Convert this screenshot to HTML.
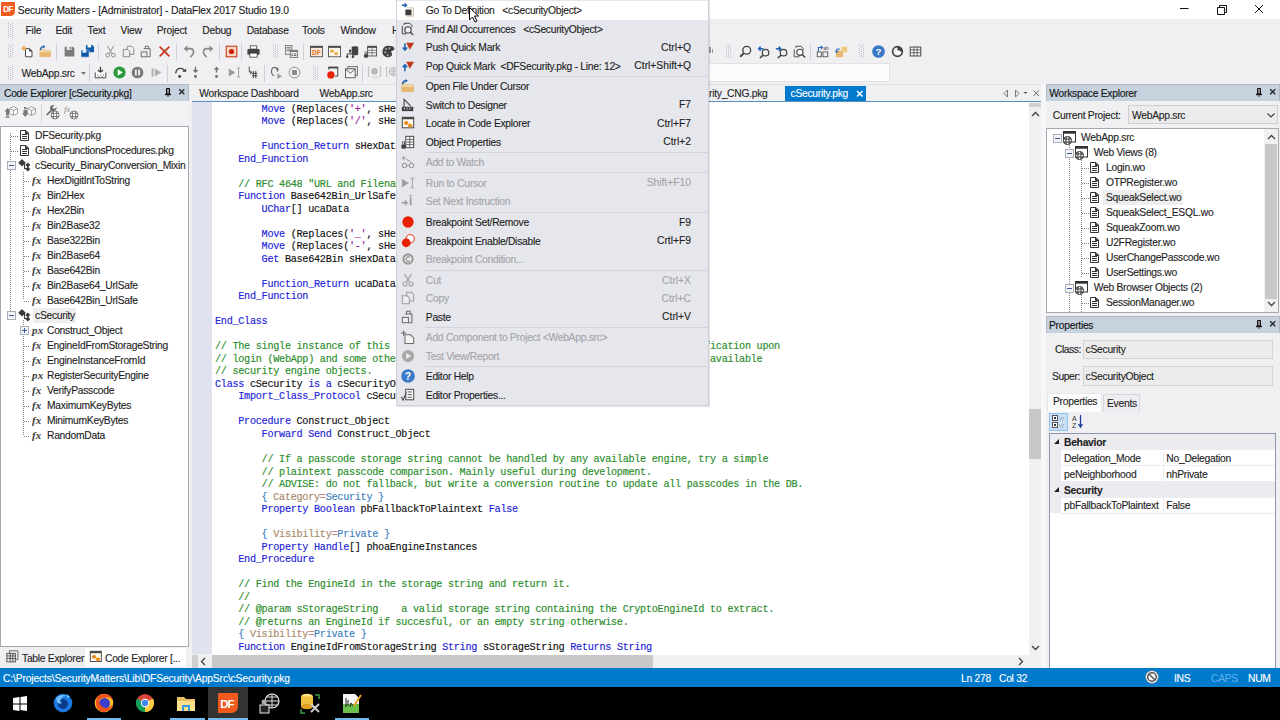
<!DOCTYPE html><html><head><meta charset="utf-8"><style>
*{margin:0;padding:0;box-sizing:border-box}
html,body{width:1280px;height:720px;overflow:hidden;background:#f0f0f2;font-family:"Liberation Sans",sans-serif;font-size:10.3px;color:#1e1e1e;position:relative}
.a{position:absolute}
.t{position:absolute;white-space:pre;line-height:14px;letter-spacing:-0.27px;-webkit-text-stroke:0.12px currentColor}
.code{position:absolute;font-family:"Liberation Mono",monospace;font-size:10.2px;letter-spacing:-0.29px;line-height:12.52px;white-space:pre;color:#111;-webkit-text-stroke:0.15px currentColor}
.k{color:#2323d8}
.c{color:#2a8c2a}
.m{color:#a88868}
.q{color:#c08888}
.b{color:#3c80c0}
.s{color:#a020a0}
svg{position:absolute;overflow:visible}
</style></head><body><div class="a" style="left:0px;top:0px;width:1280px;height:19px;background:#fff;"></div>
<svg style="left:1px;top:2px" width="14" height="14"><path d="M0 1Q0 0 1 0H14V9Q14 14 9 14H0Z" fill="#f05a1e"/><text x="2" y="10.3" font-size="8.3" font-family="Liberation Sans" font-weight="bold" fill="#fff" letter-spacing="-0.7">DF</text></svg>
<div class="t" style="left:17.8px;top:3.50px;font-size:10.3px;color:#1a1a1a;letter-spacing:-0.16px">Security Matters - [Administrator] - DataFlex 2017 Studio 19.0</div>
<svg style="left:1180px;top:4px" width="90" height="12"><path d="M0 4.5H8.5" stroke="#111" stroke-width="1"/><path d="M37.5 3.5H44.5V10.5H37.5Z M39.5 3.5V1.5H46.5V8.5H44.5" stroke="#111" fill="none" stroke-width="1"/><path d="M75 1L83 9M83 1L75 9" stroke="#111" stroke-width="1"/></svg>
<svg style="left:8px;top:23px" width="5" height="15"><g fill="#c0c0c8"><rect x="0" y="0" width="1" height="1"/><rect x="4" y="0" width="1" height="1"/><rect x="2" y="1" width="1" height="1"/><rect x="0" y="2" width="1" height="1"/><rect x="4" y="2" width="1" height="1"/><rect x="2" y="3" width="1" height="1"/><rect x="0" y="4" width="1" height="1"/><rect x="4" y="4" width="1" height="1"/><rect x="2" y="5" width="1" height="1"/><rect x="0" y="6" width="1" height="1"/><rect x="4" y="6" width="1" height="1"/><rect x="2" y="7" width="1" height="1"/><rect x="0" y="8" width="1" height="1"/><rect x="4" y="8" width="1" height="1"/><rect x="2" y="9" width="1" height="1"/><rect x="0" y="10" width="1" height="1"/><rect x="4" y="10" width="1" height="1"/><rect x="2" y="11" width="1" height="1"/><rect x="0" y="12" width="1" height="1"/><rect x="4" y="12" width="1" height="1"/><rect x="2" y="13" width="1" height="1"/><rect x="0" y="14" width="1" height="1"/><rect x="4" y="14" width="1" height="1"/></g></svg>
<div class="t" style="left:25.6px;top:23.50px;font-size:10.3px;">File</div>
<div class="t" style="left:55.5px;top:23.50px;font-size:10.3px;">Edit</div>
<div class="t" style="left:87.5px;top:23.50px;font-size:10.3px;">Text</div>
<div class="t" style="left:120.5px;top:23.50px;font-size:10.3px;">View</div>
<div class="t" style="left:156.7px;top:23.50px;font-size:10.3px;">Project</div>
<div class="t" style="left:202.3px;top:23.50px;font-size:10.3px;">Debug</div>
<div class="t" style="left:246.7px;top:23.50px;font-size:10.3px;">Database</div>
<div class="t" style="left:302px;top:23.50px;font-size:10.3px;">Tools</div>
<div class="t" style="left:340.6px;top:23.50px;font-size:10.3px;">Window</div>
<div class="t" style="left:392px;top:23.50px;font-size:10.3px;">Help</div>
<svg style="left:8px;top:44px" width="5" height="14"><g fill="#c0c0c8"><rect x="0" y="0" width="1" height="1"/><rect x="4" y="0" width="1" height="1"/><rect x="2" y="1" width="1" height="1"/><rect x="0" y="2" width="1" height="1"/><rect x="4" y="2" width="1" height="1"/><rect x="2" y="3" width="1" height="1"/><rect x="0" y="4" width="1" height="1"/><rect x="4" y="4" width="1" height="1"/><rect x="2" y="5" width="1" height="1"/><rect x="0" y="6" width="1" height="1"/><rect x="4" y="6" width="1" height="1"/><rect x="2" y="7" width="1" height="1"/><rect x="0" y="8" width="1" height="1"/><rect x="4" y="8" width="1" height="1"/><rect x="2" y="9" width="1" height="1"/><rect x="0" y="10" width="1" height="1"/><rect x="4" y="10" width="1" height="1"/><rect x="2" y="11" width="1" height="1"/><rect x="0" y="12" width="1" height="1"/><rect x="4" y="12" width="1" height="1"/><rect x="2" y="13" width="1" height="1"/></g></svg>
<svg style="left:21px;top:44.5px" width="13.0" height="13.0" viewBox="0 0 16 16"><path d="M5.5 4.5H10.5L13.5 7.5V14.5H5.5Z" fill="#fff" stroke="#424242" stroke-width="1.2"/><path d="M10 4L14 8H10Z" fill="#424242"/><path d="M3.5 1V7M0.5 4H6.5M1.4 1.9L5.6 6.1M5.6 1.9L1.4 6.1" stroke="#f0a030" stroke-width="1.1"/></svg>
<svg style="left:39px;top:44.5px" width="13.0" height="13.0" viewBox="0 0 16 16"><path d="M1 5H6L7 6.5H14V14.5H1Z" fill="#f0d8a8" stroke="#e0b878" stroke-width="0.8"/><path d="M1 9H15L14 14.5H1Z" fill="#e8b870"/><path d="M2 6Q2 2 6 2" stroke="#1e64b4" stroke-width="1.8" fill="none"/><path d="M5 0L8 2L5 4Z" fill="#1e64b4"/></svg>
<svg style="left:63px;top:44.5px" width="13.0" height="13.0" viewBox="0 0 16 16"><path d="M2 2H12L14 4V14H2Z" fill="#7a7a7a"/><rect x="4.5" y="2" width="6" height="4" fill="#eee"/><rect x="8" y="2.5" width="1.5" height="2.5" fill="#7a7a7a"/></svg>
<svg style="left:81px;top:44.5px" width="13.0" height="13.0" viewBox="0 0 16 16"><path d="M6 0H14L16 2V9H6Z" fill="#0f5aaa"/><rect x="8" y="0" width="4.5" height="3" fill="#fff"/><path d="M0 6H8L10 8V15H0Z" fill="#0f5aaa" stroke="#eeeef2" stroke-width="0.8"/><rect x="2" y="6.4" width="4.5" height="3" fill="#fff"/></svg>
<svg style="left:104px;top:44.5px" width="13.0" height="13.0" viewBox="0 0 16 16"><path d="M4 1L10 11M12 1L6 11" stroke="#8a8a8a" stroke-width="1.2" fill="none"/><circle cx="4.5" cy="12.5" r="2.3" stroke="#8a8a8a" stroke-width="1.2" fill="none"/><circle cx="11.5" cy="12.5" r="2.3" stroke="#8a8a8a" stroke-width="1.2" fill="none"/></svg>
<svg style="left:122px;top:44.5px" width="13.0" height="13.0" viewBox="0 0 16 16"><path d="M6.5 1.5H12L14.5 4V11.5H6.5Z" fill="none" stroke="#8a8a8a" stroke-width="1.2"/><path d="M1.5 5.5H7L9.5 8V14.5H1.5Z" fill="#eeeef2" stroke="#8a8a8a" stroke-width="1.2"/></svg>
<svg style="left:140px;top:44.5px" width="13.0" height="13.0" viewBox="0 0 16 16"><path d="M6.5 4.5V1.5H10.5V4.5M4.5 4.5H12.5V14.5H9" fill="none" stroke="#6d6d6d" stroke-width="1.2"/><rect x="1.5" y="8.5" width="7" height="6" fill="#eeeef2" stroke="#6d6d6d" stroke-width="1.2"/></svg>
<svg style="left:158px;top:44.5px" width="13.0" height="13.0" viewBox="0 0 16 16"><path d="M2 2L14 14M14 2L2 14" stroke="#c8341a" stroke-width="2"/></svg>
<svg style="left:183px;top:44.5px" width="13.0" height="13.0" viewBox="0 0 16 16"><path d="M4.5 4.5H8.5Q13 4.5 13 9Q13 12 9 15" stroke="#8a8a8a" stroke-width="2" fill="none"/><path d="M0.8 4.5L5.5 0.5V8.5Z" fill="#8a8a8a"/></svg>
<svg style="left:201px;top:44.5px" width="13.0" height="13.0" viewBox="0 0 16 16"><path d="M11.5 4.5H7.5Q3 4.5 3 9Q3 12 7 15" stroke="#8a8a8a" stroke-width="2" fill="none"/><path d="M15.2 4.5L10.5 0.5V8.5Z" fill="#8a8a8a"/></svg>
<svg style="left:225px;top:44.5px" width="13.0" height="13.0" viewBox="0 0 16 16"><rect x="1.5" y="1.5" width="13" height="13" fill="#f8d8c8" stroke="#c84020" stroke-width="1.4"/><circle cx="8" cy="8" r="3.2" fill="#d02000"/></svg>
<svg style="left:247px;top:44.5px" width="13.0" height="13.0" viewBox="0 0 16 16"><rect x="4" y="1" width="8" height="4" fill="#fff" stroke="#424242" stroke-width="1"/><rect x="0.5" y="5" width="15" height="7" rx="1" fill="#424242"/><rect x="3.5" y="10" width="9" height="5" fill="#fff" stroke="#424242" stroke-width="1"/></svg>
<svg style="left:285px;top:44.5px" width="13.0" height="13.0" viewBox="0 0 16 16"><rect x="0.5" y="0.5" width="8" height="11" fill="#e8e8e8" stroke="#6d6d6d"/><path d="M2 3H7M2 5H7M2 7H7" stroke="#6d6d6d"/><rect x="6.5" y="6.5" width="9" height="9" fill="#f4f4f4" stroke="#6d6d6d"/><rect x="6.5" y="6.5" width="9" height="2" fill="#6d6d6d"/><path d="M8 11H10M11 11H14M8 13H10M11 13H14" stroke="#424242"/></svg>
<svg style="left:310px;top:44.5px" width="13.0" height="13.0" viewBox="0 0 16 16"><rect x="0.5" y="1.5" width="15" height="13" fill="#fbe8d8" stroke="#424242"/><rect x="0.5" y="1.5" width="15" height="2" fill="#424242"/><text x="2.5" y="12.5" font-size="8" font-weight="bold" font-family="Liberation Sans" fill="#e07020">DF</text></svg>
<svg style="left:328px;top:44.5px" width="13.0" height="13.0" viewBox="0 0 16 16"><rect x="0.5" y="1.5" width="15" height="13" fill="#fcf4e4" stroke="#424242"/><rect x="0.5" y="1.5" width="15" height="2" fill="#424242"/><rect x="3" y="6" width="4" height="3" fill="#e8a030"/><rect x="8" y="9" width="4" height="3" fill="#e8a030"/></svg>
<svg style="left:346px;top:44.5px" width="13.0" height="13.0" viewBox="0 0 16 16"><ellipse cx="11" cy="3" rx="4" ry="1.6" fill="#424242"/><rect x="7" y="3" width="8" height="8" fill="#424242"/><ellipse cx="11" cy="11" rx="4" ry="1.6" fill="#424242"/><path d="M5 7V11M1.5 15V11H8.5V15" stroke="#424242" stroke-width="1.2" fill="none"/><circle cx="5" cy="7" r="1.5" fill="#424242"/><circle cx="1.5" cy="14.5" r="1.5" fill="#424242"/><circle cx="8.5" cy="14.5" r="1.5" fill="#424242"/></svg>
<svg style="left:364px;top:44.5px" width="13.0" height="13.0" viewBox="0 0 16 16"><rect x="4.5" y="1.5" width="11" height="12" fill="#f0f0f0" stroke="#424242"/><rect x="4.5" y="1.5" width="11" height="2" fill="#424242"/><path d="M5 6.5H15M5 9.5H15M10 4V13" stroke="#6d6d6d"/><path d="M1.5 8V12M3.5 8V12M0.5 12H4.5V15H0.5Z" stroke="#424242" fill="#424242"/></svg>
<svg style="left:382px;top:44.5px" width="13.0" height="13.0" viewBox="0 0 16 16"><path d="M8 1Q15 1 15.5 5Q15 7 12 7.5Q10.5 8 12 10Q13.5 12.5 10 14.5Q8 15.5 6 15Q0.5 14 0.5 8Q1 1 8 1Z" fill="#424242"/><circle cx="5" cy="5" r="1.2" fill="#aaa"/><circle cx="9" cy="4" r="1.2" fill="#aaa"/><circle cx="4" cy="9" r="1.2" fill="#aaa"/><circle cx="7" cy="12.5" r="1.2" fill="#aaa"/></svg>
<svg style="left:739px;top:44.5px" width="13.0" height="13.0" viewBox="0 0 16 16"><circle cx="9.5" cy="6.5" r="4.8" fill="none" stroke="#424242" stroke-width="1.7"/><path d="M6 10L1.5 14.5" stroke="#424242" stroke-width="2.4"/></svg>
<svg style="left:757px;top:44.5px" width="13.0" height="13.0" viewBox="0 0 16 16"><circle cx="10.5" cy="9.5" r="4" fill="none" stroke="#424242" stroke-width="1.5"/><path d="M7.5 12.5L3.5 16" stroke="#424242" stroke-width="2"/><path d="M8 4.5H2M4.5 2L2 4.5L4.5 7" stroke="#1e64b4" stroke-width="1.8" fill="none"/></svg>
<svg style="left:775px;top:44.5px" width="13.0" height="13.0" viewBox="0 0 16 16"><circle cx="10.5" cy="9.5" r="4" fill="none" stroke="#424242" stroke-width="1.5"/><path d="M7.5 12.5L3.5 16" stroke="#424242" stroke-width="2"/><path d="M1 4.5H7M4.5 2L7 4.5L4.5 7" stroke="#1e64b4" stroke-width="1.8" fill="none"/></svg>
<svg style="left:793px;top:44.5px" width="13.0" height="13.0" viewBox="0 0 16 16"><path d="M3.5 3.5V1.5H10L12.5 4V6M1.5 5.5V14.5H8" stroke="#424242" fill="none" stroke-width="1.1"/><circle cx="8.5" cy="9" r="3.8" fill="#fff" stroke="#424242" stroke-width="1.4"/><path d="M11 11.5L15 15.5" stroke="#424242" stroke-width="1.8"/></svg>
<svg style="left:816px;top:44.5px" width="13.0" height="13.0" viewBox="0 0 16 16"><rect x="1.5" y="8.5" width="5" height="6" fill="none" stroke="#424242"/><rect x="8.5" y="8.5" width="6" height="6" fill="none" stroke="#424242"/><path d="M3 8V3H8M6 1L8 3L6 5" stroke="#1e64b4" stroke-width="1.3" fill="none"/><text x="9" y="6" font-size="6" font-family="Liberation Sans" fill="#424242">ab</text></svg>
<svg style="left:835px;top:44.5px" width="13.0" height="13.0" viewBox="0 0 16 16"><rect x="1" y="7" width="9" height="8" fill="#e8b870"/><rect x="8" y="2" width="7" height="7" fill="#f0c880"/><path d="M6 5H2V9M0 7L2 9.5L4 7" stroke="#1e64b4" stroke-width="1.2" fill="none"/></svg>
<svg style="left:872px;top:44.5px" width="13.0" height="13.0" viewBox="0 0 16 16"><circle cx="8" cy="8" r="7.8" fill="#3a78c8"/><text x="8" y="12.6" text-anchor="middle" font-size="12" font-weight="bold" font-family="Liberation Sans" fill="#fff">?</text></svg>
<svg style="left:891px;top:44.5px" width="13.0" height="13.0" viewBox="0 0 16 16"><circle cx="8" cy="8" r="6" fill="none" stroke="#424242" stroke-width="2"/><path d="M8 8V2A6 6 0 0 1 14 8Z" fill="#424242"/><circle cx="9" cy="9" r="2.5" fill="#fff"/></svg>
<svg style="left:909px;top:44.5px" width="13.0" height="13.0" viewBox="0 0 16 16"><rect x="1.5" y="2.5" width="13" height="11" fill="#fff" stroke="#424242" stroke-width="1.2"/><path d="M1.5 6H14.5M1.5 9.5H14.5M6 2.5V13.5M10 2.5V13.5" stroke="#424242"/></svg>
<div class="a" style="left:56px;top:43px;width:1px;height:17px;background:#cfd0d8;"></div>
<div class="a" style="left:98px;top:43px;width:1px;height:17px;background:#cfd0d8;"></div>
<div class="a" style="left:176px;top:43px;width:1px;height:17px;background:#cfd0d8;"></div>
<div class="a" style="left:219px;top:43px;width:1px;height:17px;background:#cfd0d8;"></div>
<div class="a" style="left:241px;top:43px;width:1px;height:17px;background:#cfd0d8;"></div>
<div class="a" style="left:303px;top:43px;width:1px;height:17px;background:#cfd0d8;"></div>
<div class="a" style="left:810px;top:43px;width:1px;height:17px;background:#cfd0d8;"></div>
<svg style="left:273px;top:44px" width="5" height="14"><g fill="#c0c0c8"><rect x="0" y="0" width="1" height="1"/><rect x="4" y="0" width="1" height="1"/><rect x="2" y="1" width="1" height="1"/><rect x="0" y="2" width="1" height="1"/><rect x="4" y="2" width="1" height="1"/><rect x="2" y="3" width="1" height="1"/><rect x="0" y="4" width="1" height="1"/><rect x="4" y="4" width="1" height="1"/><rect x="2" y="5" width="1" height="1"/><rect x="0" y="6" width="1" height="1"/><rect x="4" y="6" width="1" height="1"/><rect x="2" y="7" width="1" height="1"/><rect x="0" y="8" width="1" height="1"/><rect x="4" y="8" width="1" height="1"/><rect x="2" y="9" width="1" height="1"/><rect x="0" y="10" width="1" height="1"/><rect x="4" y="10" width="1" height="1"/><rect x="2" y="11" width="1" height="1"/><rect x="0" y="12" width="1" height="1"/><rect x="4" y="12" width="1" height="1"/><rect x="2" y="13" width="1" height="1"/></g></svg>
<svg style="left:726px;top:44px" width="5" height="14"><g fill="#c0c0c8"><rect x="0" y="0" width="1" height="1"/><rect x="4" y="0" width="1" height="1"/><rect x="2" y="1" width="1" height="1"/><rect x="0" y="2" width="1" height="1"/><rect x="4" y="2" width="1" height="1"/><rect x="2" y="3" width="1" height="1"/><rect x="0" y="4" width="1" height="1"/><rect x="4" y="4" width="1" height="1"/><rect x="2" y="5" width="1" height="1"/><rect x="0" y="6" width="1" height="1"/><rect x="4" y="6" width="1" height="1"/><rect x="2" y="7" width="1" height="1"/><rect x="0" y="8" width="1" height="1"/><rect x="4" y="8" width="1" height="1"/><rect x="2" y="9" width="1" height="1"/><rect x="0" y="10" width="1" height="1"/><rect x="4" y="10" width="1" height="1"/><rect x="2" y="11" width="1" height="1"/><rect x="0" y="12" width="1" height="1"/><rect x="4" y="12" width="1" height="1"/><rect x="2" y="13" width="1" height="1"/></g></svg>
<svg style="left:859px;top:44px" width="5" height="14"><g fill="#c0c0c8"><rect x="0" y="0" width="1" height="1"/><rect x="4" y="0" width="1" height="1"/><rect x="2" y="1" width="1" height="1"/><rect x="0" y="2" width="1" height="1"/><rect x="4" y="2" width="1" height="1"/><rect x="2" y="3" width="1" height="1"/><rect x="0" y="4" width="1" height="1"/><rect x="4" y="4" width="1" height="1"/><rect x="2" y="5" width="1" height="1"/><rect x="0" y="6" width="1" height="1"/><rect x="4" y="6" width="1" height="1"/><rect x="2" y="7" width="1" height="1"/><rect x="0" y="8" width="1" height="1"/><rect x="4" y="8" width="1" height="1"/><rect x="2" y="9" width="1" height="1"/><rect x="0" y="10" width="1" height="1"/><rect x="4" y="10" width="1" height="1"/><rect x="2" y="11" width="1" height="1"/><rect x="0" y="12" width="1" height="1"/><rect x="4" y="12" width="1" height="1"/><rect x="2" y="13" width="1" height="1"/></g></svg>
<div class="a" style="left:709px;top:47px;width:1.5px;height:6px;background:#9a9a9a;"></div>
<div class="a" style="left:711.5px;top:49px;width:1.5px;height:4px;background:#9a9a9a;"></div>
<svg style="left:8px;top:66px" width="5" height="14"><g fill="#c0c0c8"><rect x="0" y="0" width="1" height="1"/><rect x="4" y="0" width="1" height="1"/><rect x="2" y="1" width="1" height="1"/><rect x="0" y="2" width="1" height="1"/><rect x="4" y="2" width="1" height="1"/><rect x="2" y="3" width="1" height="1"/><rect x="0" y="4" width="1" height="1"/><rect x="4" y="4" width="1" height="1"/><rect x="2" y="5" width="1" height="1"/><rect x="0" y="6" width="1" height="1"/><rect x="4" y="6" width="1" height="1"/><rect x="2" y="7" width="1" height="1"/><rect x="0" y="8" width="1" height="1"/><rect x="4" y="8" width="1" height="1"/><rect x="2" y="9" width="1" height="1"/><rect x="0" y="10" width="1" height="1"/><rect x="4" y="10" width="1" height="1"/><rect x="2" y="11" width="1" height="1"/><rect x="0" y="12" width="1" height="1"/><rect x="4" y="12" width="1" height="1"/><rect x="2" y="13" width="1" height="1"/></g></svg>
<div class="t" style="left:21.5px;top:67.20px;font-size:10.3px;">WebApp.src</div>
<svg style="left:81px;top:72px" width="5" height="3"><path d="M0 0H5L2.5 3Z" fill="#777"/></svg>
<div class="a" style="left:89px;top:65px;width:1px;height:17px;background:#cfd0d8;"></div>
<svg style="left:94px;top:66px" width="13.0" height="13.0" viewBox="0 0 16 16"><path d="M8 1V8M5 5L8 8L11 5" stroke="#424242" stroke-width="1.6" fill="none"/><path d="M1.5 8V14.5H14.5V8" stroke="#424242" stroke-width="1.2" fill="#fff"/><path d="M4 11H5M7.5 11H8.5M11 11H12M5.5 13H6.5M9.5 13H10.5" stroke="#424242" stroke-width="1.2"/></svg>
<svg style="left:113px;top:66px" width="13.0" height="13.0" viewBox="0 0 16 16"><circle cx="8" cy="8" r="7.5" fill="#2a9a3a"/><path d="M5.8 4L12 8L5.8 12Z" fill="#fff"/></svg>
<svg style="left:131px;top:66px" width="13.0" height="13.0" viewBox="0 0 16 16"><circle cx="8" cy="8" r="7.2" fill="#7a7a7a"/><rect x="5" y="4.5" width="2" height="7" fill="#fff"/><rect x="9" y="4.5" width="2" height="7" fill="#fff"/></svg>
<svg style="left:150px;top:66px" width="13.0" height="13.0" viewBox="0 0 16 16"><rect x="2" y="3" width="2.5" height="10" fill="#b0b0b0"/><path d="M6 3L14 8L6 13Z" fill="#b0b0b0"/></svg>
<svg style="left:174px;top:66px" width="13.0" height="13.0" viewBox="0 0 16 16"><path d="M2 9Q3 3 8 3Q12 3 13 7" stroke="#424242" stroke-width="1.6" fill="none"/><path d="M10 7H15V3Z" fill="#424242"/><circle cx="7" cy="13" r="1.8" fill="#424242"/></svg>
<svg style="left:189px;top:66px" width="13.0" height="13.0" viewBox="0 0 16 16"><path d="M8 1V7M5.5 5L8 7.5L10.5 5" stroke="#6d6d6d" stroke-width="1.6" fill="none"/><circle cx="8" cy="13" r="1.8" fill="#6d6d6d"/></svg>
<svg style="left:210px;top:66px" width="13.0" height="13.0" viewBox="0 0 16 16"><path d="M8 8V2M5.5 4.5L8 2L10.5 4.5" stroke="#6d6d6d" stroke-width="1.6" fill="none"/><circle cx="8" cy="13" r="1.8" fill="#6d6d6d"/></svg>
<svg style="left:228px;top:66px" width="13.0" height="13.0" viewBox="0 0 16 16"><path d="M1 3L9 8L1 13Z" fill="#9a9a9a"/><path d="M11 2.5H15M13 2.5V13.5M11 13.5H15" stroke="#9a9a9a" stroke-width="1.1"/></svg>
<svg style="left:246px;top:66px" width="13.0" height="13.0" viewBox="0 0 16 16"><path d="M4 0.5V5.5Q4 8 7 8M5 6L7 8L5 10" stroke="#6d6d6d" stroke-width="1.4" fill="none"/><path d="M9 6V15M12 6V15M7.5 9H14M7.5 12H14" stroke="#424242" stroke-width="1.2"/></svg>
<svg style="left:270px;top:66px" width="13.0" height="13.0" viewBox="0 0 16 16"><path d="M5 12Q1 10 2 5Q3 1 7 2Q10 3 9 7" stroke="#6d6d6d" stroke-width="1.5" fill="none"/><path d="M7 4L10 2L11 5Z" fill="#6d6d6d"/><path d="M9 9L15 12.5L9 16Z" fill="#a0a0a0"/></svg>
<svg style="left:288px;top:66px" width="13.0" height="13.0" viewBox="0 0 16 16"><circle cx="8" cy="8" r="6.6" stroke="#8a8a8a" stroke-width="1.2" fill="none"/><rect x="5" y="5" width="6" height="6" fill="#8a8a8a"/></svg>
<svg style="left:326px;top:66px" width="13.0" height="13.0" viewBox="0 0 16 16"><path d="M3.5 4.5V1.5H14.5V12.5H11" stroke="#424242" stroke-width="1.2" fill="none"/><rect x="3" y="1" width="12" height="2" fill="#424242"/><circle cx="6" cy="11" r="4.5" fill="#e82000"/></svg>
<svg style="left:345px;top:66px" width="13.0" height="13.0" viewBox="0 0 16 16"><rect x="3.5" y="0.5" width="12" height="11" fill="#ddd" stroke="#6d6d6d"/><rect x="0.5" y="3.5" width="12" height="11" fill="#f4f4f4" stroke="#424242"/><path d="M1 4L6.5 9L12 4" stroke="#424242" fill="none"/></svg>
<svg style="left:368px;top:66px" width="13.0" height="13.0" viewBox="0 0 16 16"><path d="M2.5 1.5H0.5V12.5H2.5M13.5 1.5H15.5V12.5H13.5" stroke="#b0b0b0" fill="none"/><path d="M4 4L8 2L12 4V9L8 11L4 9Z" fill="#b8b8b8"/><path d="M5 15L6 13L7 15M9 15L10 13L11 15" stroke="#c0c0c0" fill="none"/></svg>
<svg style="left:386px;top:66px" width="13.0" height="13.0" viewBox="0 0 16 16"><path d="M2.5 1.5H0.5V12.5H2.5" stroke="#b0b0b0" fill="none"/><circle cx="9" cy="7" r="5" fill="none" stroke="#b0b0b0"/><path d="M4 7H14M9 2V12M5 4.5H13M5 9.5H13" stroke="#b0b0b0"/></svg>
<div class="a" style="left:167px;top:65px;width:1px;height:17px;background:#cfd0d8;"></div>
<div class="a" style="left:264px;top:65px;width:1px;height:17px;background:#cfd0d8;"></div>
<div class="a" style="left:362px;top:65px;width:1px;height:17px;background:#cfd0d8;"></div>
<svg style="left:313px;top:66px" width="5" height="14"><g fill="#c0c0c8"><rect x="0" y="0" width="1" height="1"/><rect x="4" y="0" width="1" height="1"/><rect x="2" y="1" width="1" height="1"/><rect x="0" y="2" width="1" height="1"/><rect x="4" y="2" width="1" height="1"/><rect x="2" y="3" width="1" height="1"/><rect x="0" y="4" width="1" height="1"/><rect x="4" y="4" width="1" height="1"/><rect x="2" y="5" width="1" height="1"/><rect x="0" y="6" width="1" height="1"/><rect x="4" y="6" width="1" height="1"/><rect x="2" y="7" width="1" height="1"/><rect x="0" y="8" width="1" height="1"/><rect x="4" y="8" width="1" height="1"/><rect x="2" y="9" width="1" height="1"/><rect x="0" y="10" width="1" height="1"/><rect x="4" y="10" width="1" height="1"/><rect x="2" y="11" width="1" height="1"/><rect x="0" y="12" width="1" height="1"/><rect x="4" y="12" width="1" height="1"/><rect x="2" y="13" width="1" height="1"/></g></svg>
<div class="a" style="left:400px;top:63px;width:490px;height:19px;background:#fcfcfc;border:1px solid #e2e2e6"></div>
<div class="a" style="left:0px;top:83.5px;width:1280px;height:1px;background:#e2e2e6;"></div>
<div class="a" style="left:-1px;top:84px;width:190px;height:17px;background:#c6d2de;border:1px solid #b4b8c2;border-bottom:none"></div>
<div class="t" style="left:4px;top:87.00px;font-size:10.3px;color:#111">Code Explorer [cSecurity.pkg]</div>
<svg style="left:165px;top:88px" width="24" height="10"><path d="M1.5 0.5H4.5V6H1.5Z" fill="#888" stroke="#111"/><path d="M0 6.5H6" stroke="#111" stroke-width="1.4"/><path d="M3 7V9" stroke="#333"/><path d="M14.2 1.2L19.3 6.3M19.3 1.2L14.2 6.3" stroke="#222" stroke-width="1.3"/></svg>
<div class="a" style="left:0px;top:101px;width:189px;height:25px;background:#f2f2f4;"></div>
<svg style="left:0px;top:100px" width="20.0" height="20.0" viewBox="0 0 20 20"><path d="M13.5 6.5L17.5 8.5V13.5L13.5 15.5L9.5 13.5V8.5Z M9.5 8.5L13.5 10.5L17.5 8.5M13.5 10.5V15.5" fill="#fafafa" stroke="#9a9a9a" stroke-width="0.9"/><path d="M7.5 8L10.5 11.5H9V15.5H6V11.5H4.5Z" fill="#7a7a7a"/><rect x="5.5" y="16.3" width="4" height="1.4" fill="#7a7a7a"/></svg>
<svg style="left:18px;top:100px" width="20.0" height="20.0" viewBox="0 0 20 20"><path d="M13.5 6.5L17.5 8.5V13.5L13.5 15.5L9.5 13.5V8.5Z M9.5 8.5L13.5 10.5L17.5 8.5M13.5 10.5V15.5" fill="#fafafa" stroke="#9a9a9a" stroke-width="0.9"/><rect x="6" y="7" width="2.5" height="2.2" fill="#7a7a7a"/><path d="M7.2 17L10.5 13.2H9V10H5.5V13.2H4Z" fill="#7a7a7a"/></svg>
<div class="a" style="left:40.5px;top:104px;width:1px;height:20px;background:#d8d8dc;"></div>
<svg style="left:40px;top:100px" width="20.0" height="20.0" viewBox="0 0 20 20"><path d="M6 14.5L10.5 10Q9 6.5 12 5.3Q13.5 4.8 14.5 5.2L12.6 7.1L13 8.6L14.5 9L16.4 7.1Q16.8 8.2 16.2 9.6Q15 12 11.6 11.2L7.2 15.6Z" fill="#6a6a6a"/><circle cx="15" cy="15" r="4" fill="#fff" stroke="#777" stroke-width="1"/><path d="M13.5 11.4V18.6M16.5 11.4V18.6M11.4 13.5H18.6M11.4 16.5H18.6" stroke="#777" stroke-width="0.9"/></svg>
<svg style="left:60px;top:100px" width="20.0" height="20.0" viewBox="0 0 20 20"><text x="4" y="12" font-size="8.5" font-style="italic" font-family="Liberation Serif" fill="#8a8a8a">fx</text><circle cx="14" cy="15" r="4" fill="#fff" stroke="#777" stroke-width="1"/><path d="M12.5 11.4V18.6M15.5 11.4V18.6M10.4 13.5H17.6M10.4 16.5H17.6" stroke="#777" stroke-width="0.9"/></svg>
<div class="a" style="left:0px;top:126px;width:189px;height:521px;background:#fff;border:1px solid #a8a8b0"></div>
<div class="a" style="left:3px;top:648px;width:82px;height:19px;background:#efeff2;"></div>
<div class="a" style="left:85px;top:648px;width:101px;height:19px;background:#fff;"></div>
<svg style="left:6px;top:650px" width="13.6" height="13.6" viewBox="0 0 16 16"><rect x="4" y="1" width="10" height="10" fill="none" stroke="#555"/><rect x="1" y="4" width="10" height="10" fill="#eee" stroke="#444"/><path d="M1 7H11M1 10H11M5 4V14M8 4V14" stroke="#444"/></svg>
<div class="t" style="left:22px;top:651.90px;font-size:10.3px;">Table Explorer</div>
<svg style="left:89px;top:650px" width="13.6" height="13.6" viewBox="0 0 16 16"><rect x="1.5" y="1.5" width="13" height="12" fill="#fff8ec" stroke="#424242" stroke-width="1.1"/><rect x="1.5" y="1.5" width="13" height="2.2" fill="#424242"/><path d="M3.5 7L6 5.5L8.5 7V9L6 10.5L3.5 9Z" fill="#e89020"/><path d="M8 10L10.5 8.5L13 10V12L10.5 13.5L8 12Z" fill="#e89020"/></svg>
<div class="t" style="left:105px;top:651.90px;font-size:10.3px;">Code Explorer [...</div>
<div class="a" style="left:10px;top:133px;width:1px;height:29px;background-image:linear-gradient(#808080 50%,transparent 50%);background-size:1px 2px"></div>
<div class="a" style="left:10px;top:170px;width:1px;height:141px;background-image:linear-gradient(#808080 50%,transparent 50%);background-size:1px 2px"></div>
<div class="a" style="left:23px;top:172px;width:1px;height:128px;background-image:linear-gradient(#808080 50%,transparent 50%);background-size:1px 2px"></div>
<div class="a" style="left:23px;top:320px;width:1px;height:115px;background-image:linear-gradient(#808080 50%,transparent 50%);background-size:1px 2px"></div>
<div class="a" style="left:33px;top:308px;width:43px;height:15px;background:#eeeeee;"></div>
<div class="a" style="left:11px;top:136px;width:7px;height:1px;background-image:linear-gradient(90deg,#808080 50%,transparent 50%);background-size:2px 1px"></div>
<svg style="left:20px;top:130px" width="9.0" height="11.0" viewBox="0 0 9 11"><path d="M0.5 0.5H6L8.5 3V10.5H0.5Z" fill="#fff" stroke="#333"/><path d="M5.5 0.5V3.5H8.5" fill="#333" stroke="#333"/><path d="M2 4.5H7M2 6.5H7M2 8.5H7" stroke="#333"/></svg>
<div class="t" style="left:35px;top:128.80px;font-size:10.3px;">DFSecurity.pkg</div>
<div class="a" style="left:11px;top:151px;width:7px;height:1px;background-image:linear-gradient(90deg,#808080 50%,transparent 50%);background-size:2px 1px"></div>
<svg style="left:20px;top:145px" width="9.0" height="11.0" viewBox="0 0 9 11"><path d="M0.5 0.5H6L8.5 3V10.5H0.5Z" fill="#fff" stroke="#333"/><path d="M5.5 0.5V3.5H8.5" fill="#333" stroke="#333"/><path d="M2 4.5H7M2 6.5H7M2 8.5H7" stroke="#333"/></svg>
<div class="t" style="left:35px;top:143.80px;font-size:10.3px;">GlobalFunctionsProcedures.pkg</div>
<svg style="left:7px;top:161px" width="9.0" height="9.0" viewBox="0 0 9 9"><rect x="0.5" y="0.5" width="8" height="8" fill="#f4f4f8" stroke="#a8b0bc"/><path d="M2 4.5H7" stroke="#3a5a9a"/></svg>
<svg style="left:19px;top:158px" width="12.0" height="14.0" viewBox="0 0 12 14"><path d="M3 1L6.8 4.8L3 8.6L-0.8 4.8Z" fill="#3a3a3a"/><path d="M3 5H5.5V10.5H8" stroke="#3a3a3a" stroke-width="1.1" fill="none"/><path d="M8.8 4.5L11.3 7L8.8 9.5L6.3 7Z" fill="#3a3a3a"/><path d="M8.8 8.5L11.3 11L8.8 13.5L6.3 11Z" fill="#3a3a3a"/></svg>
<div class="t" style="left:35px;top:158.80px;font-size:10.3px;">cSecurity_BinaryConversion_Mixin</div>
<div class="a" style="left:24px;top:181px;width:6px;height:1px;background-image:linear-gradient(90deg,#808080 50%,transparent 50%);background-size:2px 1px"></div>
<div class="a" style="left:32px;top:173.9px;white-space:pre;line-height:12px;font-family:'Liberation Serif',serif;font-style:italic;font-weight:bold;font-size:11px;color:#3c3c3c;letter-spacing:0.2px">fx</div>
<div class="t" style="left:47px;top:173.80px;font-size:10.3px;">HexDigitIntToString</div>
<div class="a" style="left:24px;top:196px;width:6px;height:1px;background-image:linear-gradient(90deg,#808080 50%,transparent 50%);background-size:2px 1px"></div>
<div class="a" style="left:32px;top:188.9px;white-space:pre;line-height:12px;font-family:'Liberation Serif',serif;font-style:italic;font-weight:bold;font-size:11px;color:#3c3c3c;letter-spacing:0.2px">fx</div>
<div class="t" style="left:47px;top:188.80px;font-size:10.3px;">Bin2Hex</div>
<div class="a" style="left:24px;top:211px;width:6px;height:1px;background-image:linear-gradient(90deg,#808080 50%,transparent 50%);background-size:2px 1px"></div>
<div class="a" style="left:32px;top:203.9px;white-space:pre;line-height:12px;font-family:'Liberation Serif',serif;font-style:italic;font-weight:bold;font-size:11px;color:#3c3c3c;letter-spacing:0.2px">fx</div>
<div class="t" style="left:47px;top:203.80px;font-size:10.3px;">Hex2Bin</div>
<div class="a" style="left:24px;top:226px;width:6px;height:1px;background-image:linear-gradient(90deg,#808080 50%,transparent 50%);background-size:2px 1px"></div>
<div class="a" style="left:32px;top:218.9px;white-space:pre;line-height:12px;font-family:'Liberation Serif',serif;font-style:italic;font-weight:bold;font-size:11px;color:#3c3c3c;letter-spacing:0.2px">fx</div>
<div class="t" style="left:47px;top:218.80px;font-size:10.3px;">Bin2Base32</div>
<div class="a" style="left:24px;top:241px;width:6px;height:1px;background-image:linear-gradient(90deg,#808080 50%,transparent 50%);background-size:2px 1px"></div>
<div class="a" style="left:32px;top:233.9px;white-space:pre;line-height:12px;font-family:'Liberation Serif',serif;font-style:italic;font-weight:bold;font-size:11px;color:#3c3c3c;letter-spacing:0.2px">fx</div>
<div class="t" style="left:47px;top:233.80px;font-size:10.3px;">Base322Bin</div>
<div class="a" style="left:24px;top:256px;width:6px;height:1px;background-image:linear-gradient(90deg,#808080 50%,transparent 50%);background-size:2px 1px"></div>
<div class="a" style="left:32px;top:248.89999999999998px;white-space:pre;line-height:12px;font-family:'Liberation Serif',serif;font-style:italic;font-weight:bold;font-size:11px;color:#3c3c3c;letter-spacing:0.2px">fx</div>
<div class="t" style="left:47px;top:248.80px;font-size:10.3px;">Bin2Base64</div>
<div class="a" style="left:24px;top:271px;width:6px;height:1px;background-image:linear-gradient(90deg,#808080 50%,transparent 50%);background-size:2px 1px"></div>
<div class="a" style="left:32px;top:263.9px;white-space:pre;line-height:12px;font-family:'Liberation Serif',serif;font-style:italic;font-weight:bold;font-size:11px;color:#3c3c3c;letter-spacing:0.2px">fx</div>
<div class="t" style="left:47px;top:263.80px;font-size:10.3px;">Base642Bin</div>
<div class="a" style="left:24px;top:286px;width:6px;height:1px;background-image:linear-gradient(90deg,#808080 50%,transparent 50%);background-size:2px 1px"></div>
<div class="a" style="left:32px;top:278.9px;white-space:pre;line-height:12px;font-family:'Liberation Serif',serif;font-style:italic;font-weight:bold;font-size:11px;color:#3c3c3c;letter-spacing:0.2px">fx</div>
<div class="t" style="left:47px;top:278.80px;font-size:10.3px;">Bin2Base64_UrlSafe</div>
<div class="a" style="left:24px;top:301px;width:6px;height:1px;background-image:linear-gradient(90deg,#808080 50%,transparent 50%);background-size:2px 1px"></div>
<div class="a" style="left:32px;top:293.9px;white-space:pre;line-height:12px;font-family:'Liberation Serif',serif;font-style:italic;font-weight:bold;font-size:11px;color:#3c3c3c;letter-spacing:0.2px">fx</div>
<div class="t" style="left:47px;top:293.80px;font-size:10.3px;">Base642Bin_UrlSafe</div>
<svg style="left:7px;top:311px" width="9.0" height="9.0" viewBox="0 0 9 9"><rect x="0.5" y="0.5" width="8" height="8" fill="#f4f4f8" stroke="#a8b0bc"/><path d="M2 4.5H7" stroke="#3a5a9a"/></svg>
<svg style="left:19px;top:308px" width="12.0" height="14.0" viewBox="0 0 12 14"><path d="M3 1L6.8 4.8L3 8.6L-0.8 4.8Z" fill="#3a3a3a"/><path d="M3 5H5.5V10.5H8" stroke="#3a3a3a" stroke-width="1.1" fill="none"/><path d="M8.8 4.5L11.3 7L8.8 9.5L6.3 7Z" fill="#3a3a3a"/><path d="M8.8 8.5L11.3 11L8.8 13.5L6.3 11Z" fill="#3a3a3a"/></svg>
<div class="t" style="left:35px;top:308.80px;font-size:10.3px;">cSecurity</div>
<svg style="left:19.5px;top:326px" width="9.0" height="9.0" viewBox="0 0 9 9"><rect x="0.5" y="0.5" width="8" height="8" fill="#f4f4f8" stroke="#a8b0bc"/><path d="M2 4.5H7M4.5 2V7" stroke="#3a5a9a"/></svg>
<div class="a" style="left:32px;top:323.9px;white-space:pre;line-height:12px;font-family:'Liberation Serif',serif;font-style:italic;font-weight:bold;font-size:11px;color:#3c3c3c;letter-spacing:0.2px">px</div>
<div class="t" style="left:47px;top:323.80px;font-size:10.3px;">Construct_Object</div>
<div class="a" style="left:24px;top:346px;width:6px;height:1px;background-image:linear-gradient(90deg,#808080 50%,transparent 50%);background-size:2px 1px"></div>
<div class="a" style="left:32px;top:338.9px;white-space:pre;line-height:12px;font-family:'Liberation Serif',serif;font-style:italic;font-weight:bold;font-size:11px;color:#3c3c3c;letter-spacing:0.2px">fx</div>
<div class="t" style="left:47px;top:338.80px;font-size:10.3px;">EngineIdFromStorageString</div>
<div class="a" style="left:24px;top:361px;width:6px;height:1px;background-image:linear-gradient(90deg,#808080 50%,transparent 50%);background-size:2px 1px"></div>
<div class="a" style="left:32px;top:353.9px;white-space:pre;line-height:12px;font-family:'Liberation Serif',serif;font-style:italic;font-weight:bold;font-size:11px;color:#3c3c3c;letter-spacing:0.2px">fx</div>
<div class="t" style="left:47px;top:353.80px;font-size:10.3px;">EngineInstanceFromId</div>
<div class="a" style="left:24px;top:376px;width:6px;height:1px;background-image:linear-gradient(90deg,#808080 50%,transparent 50%);background-size:2px 1px"></div>
<div class="a" style="left:32px;top:368.9px;white-space:pre;line-height:12px;font-family:'Liberation Serif',serif;font-style:italic;font-weight:bold;font-size:11px;color:#3c3c3c;letter-spacing:0.2px">px</div>
<div class="t" style="left:47px;top:368.80px;font-size:10.3px;">RegisterSecurityEngine</div>
<div class="a" style="left:24px;top:391px;width:6px;height:1px;background-image:linear-gradient(90deg,#808080 50%,transparent 50%);background-size:2px 1px"></div>
<div class="a" style="left:32px;top:383.9px;white-space:pre;line-height:12px;font-family:'Liberation Serif',serif;font-style:italic;font-weight:bold;font-size:11px;color:#3c3c3c;letter-spacing:0.2px">fx</div>
<div class="t" style="left:47px;top:383.80px;font-size:10.3px;">VerifyPasscode</div>
<div class="a" style="left:24px;top:406px;width:6px;height:1px;background-image:linear-gradient(90deg,#808080 50%,transparent 50%);background-size:2px 1px"></div>
<div class="a" style="left:32px;top:398.9px;white-space:pre;line-height:12px;font-family:'Liberation Serif',serif;font-style:italic;font-weight:bold;font-size:11px;color:#3c3c3c;letter-spacing:0.2px">fx</div>
<div class="t" style="left:47px;top:398.80px;font-size:10.3px;">MaximumKeyBytes</div>
<div class="a" style="left:24px;top:421px;width:6px;height:1px;background-image:linear-gradient(90deg,#808080 50%,transparent 50%);background-size:2px 1px"></div>
<div class="a" style="left:32px;top:413.9px;white-space:pre;line-height:12px;font-family:'Liberation Serif',serif;font-style:italic;font-weight:bold;font-size:11px;color:#3c3c3c;letter-spacing:0.2px">fx</div>
<div class="t" style="left:47px;top:413.80px;font-size:10.3px;">MinimumKeyBytes</div>
<div class="a" style="left:24px;top:436px;width:6px;height:1px;background-image:linear-gradient(90deg,#808080 50%,transparent 50%);background-size:2px 1px"></div>
<div class="a" style="left:32px;top:428.9px;white-space:pre;line-height:12px;font-family:'Liberation Serif',serif;font-style:italic;font-weight:bold;font-size:11px;color:#3c3c3c;letter-spacing:0.2px">fx</div>
<div class="t" style="left:47px;top:428.80px;font-size:10.3px;">RandomData</div>
<div class="a" style="left:192px;top:85px;width:850px;height:16px;background:#f0f0f2;"></div>
<div class="a" style="left:192px;top:100.5px;width:850px;height:1.5px;background:#5a8ec0;"></div>
<div class="a" style="left:192px;top:102px;width:20px;height:552px;background:#e0e2f0;"></div>
<div class="a" style="left:212px;top:102px;width:817px;height:553px;background:#fff;"></div>
<div class="code" style="left:215px;top:103.6px">        <span class="k">Move</span> (Replaces(<span class="s">&#x27;+&#x27;</span>, sHexData, <span class="s">&#x27;-&#x27;</span>)) <span class="k">to</span> sHexData
        <span class="k">Move</span> (Replaces(<span class="s">&#x27;/&#x27;</span>, sHexData, <span class="s">&#x27;_&#x27;</span>)) <span class="k">to</span> sHexData

        <span class="k">Function_Return</span> sHexData
    <span class="k">End_Function</span>

    <span class="c">// RFC 4648 &quot;URL and Filename safe&quot; Base 64 Alphabet</span>
    <span class="k">Function</span> Base642Bin_UrlSafe <span class="k">String</span> sHexData <span class="k">Returns</span> <span class="k">UChar</span>[]
        <span class="k">UChar</span>[] ucaData

        <span class="k">Move</span> (Replaces(<span class="s">&#x27;_&#x27;</span>, sHexData, <span class="s">&#x27;/&#x27;</span>)) <span class="k">to</span> sHexData
        <span class="k">Move</span> (Replaces(<span class="s">&#x27;-&#x27;</span>, sHexData, <span class="s">&#x27;+&#x27;</span>)) <span class="k">to</span> sHexData
        <span class="k">Get</span> Base642Bin sHexData <span class="k">to</span> ucaData

        <span class="k">Function_Return</span> ucaData
    <span class="k">End_Function</span>

<span class="k">End_Class</span>

<span class="c">// The single instance of this class is used by the application    for passcode verification upon</span>
<span class="c">// login (WebApp) and some other places. It maintains the collection          of all available</span>
<span class="c">// security engine objects.</span>
<span class="k">Class</span> cSecurity <span class="k">is</span> <span class="k">a</span> cSecurityObject
    <span class="k">Import_Class_Protocol</span> cSecurity_BinaryConversion_Mixin

    <span class="k">Procedure</span> Construct_Object
        <span class="k">Forward</span> <span class="k">Send</span> Construct_Object

        <span class="c">// If a passcode storage string cannot be handled by any available engine, try a simple</span>
        <span class="c">// plaintext passcode comparison. Mainly useful during development.</span>
        <span class="c">// ADVISE: do not fallback, but write a conversion routine to update all passcodes in the DB.</span>
        <span class="b">{</span> <span class="m">Category</span><span class="q">=</span><span class="b">Security</span> <span class="b">}</span>
        <span class="k">Property</span> <span class="k">Boolean</span> pbFallbackToPlaintext <span class="k">False</span>

        <span class="b">{</span> <span class="m">Visibility</span><span class="q">=</span><span class="b">Private</span> <span class="b">}</span>
        <span class="k">Property</span> <span class="k">Handle</span>[] phoaEngineInstances
    <span class="k">End_Procedure</span>

    <span class="c">// Find the EngineId in the storage string and return it.</span>
    <span class="c">//</span>
    <span class="c">// @param sStorageString    a valid storage string containing the CryptoEngineId to extract.</span>
    <span class="c">// @returns an EngineId if succesful, or an empty string otherwise.</span>
    <span class="b">{</span> <span class="m">Visibility</span><span class="q">=</span><span class="b">Private</span> <span class="b">}</span>
    <span class="k">Function</span> EngineIdFromStorageString <span class="k">String</span> sStorageString <span class="k">Returns</span> <span class="k">String</span></div>
<div class="a" style="left:1029px;top:102px;width:12px;height:553px;background:#f0f0f0;"></div>
<div class="a" style="left:1041px;top:84px;width:5px;height:584px;background:#f7f7f9;"></div>
<div class="a" style="left:1029px;top:103px;width:12px;height:4px;background:#d0d0d0;"></div>
<svg style="left:1031px;top:111px" width="9.0" height="6.0" viewBox="0 0 9 6"><path d="M1 5L4.5 1.5L8 5" stroke="#444" stroke-width="1.4" fill="none"/></svg>
<div class="a" style="left:1029px;top:409px;width:12px;height:50px;background:#c8c8c8;"></div>
<svg style="left:1031px;top:645px" width="9.0" height="6.0" viewBox="0 0 9 6"><path d="M1 1L4.5 4.5L8 1" stroke="#444" stroke-width="1.4" fill="none"/></svg>
<div class="a" style="left:192px;top:655px;width:837px;height:13px;background:#f0f0f0;"></div>
<div class="a" style="left:192px;top:655px;width:6px;height:13px;background:#d0d0d0;"></div>
<svg style="left:200px;top:657px" width="6.0" height="9.0" viewBox="0 0 6 9"><path d="M5 1L1.5 4.5L5 8" stroke="#444" stroke-width="1.4" fill="none"/></svg>
<div class="a" style="left:212px;top:655px;width:441px;height:12.5px;background:#c8c8c8;"></div>
<svg style="left:1018px;top:657px" width="6.0" height="9.0" viewBox="0 0 6 9"><path d="M1 1L4.5 4.5L1 8" stroke="#444" stroke-width="1.4" fill="none"/></svg>
<div class="a" style="left:785px;top:86px;width:81px;height:15px;background:#007acc;"></div>
<div class="t" style="left:790.5px;top:87.00px;font-size:10.3px;color:#fff">cSecurity.pkg</div>
<svg style="left:856px;top:90px" width="8" height="8"><path d="M1 1L6.5 6.5M6.5 1L1 6.5" stroke="#fff" stroke-width="1.5"/></svg>
<div class="t" style="left:199.3px;top:87.20px;font-size:10.3px;">Workspace Dashboard</div>
<div class="t" style="left:319.5px;top:87.20px;font-size:10.3px;">WebApp.src</div>
<div class="t" style="left:709px;top:87.20px;font-size:10.3px;">rity_CNG.pkg</div>
<svg style="left:1003px;top:89px" width="38.0" height="9.0" viewBox="0 0 38 9"><path d="M4.5 1L1 4.5L4.5 8Z" fill="none" stroke="#777"/><path d="M12.5 1L16 4.5L12.5 8Z" fill="none" stroke="#777"/><path d="M20.5 3H24.5L22.5 5Z" fill="#555"/><path d="M30.5 1.5L36 7M36 1.5L30.5 7" stroke="#666"/></svg>
<div class="a" style="left:1046px;top:84px;width:234px;height:17px;background:#c6d2de;border:1px solid #b4b8c2;border-bottom:none"></div>
<div class="t" style="left:1049.3px;top:87.10px;font-size:10.3px;color:#111">Workspace Explorer</div>
<svg style="left:1255.5px;top:88px" width="24" height="10"><path d="M1.5 0.5H4.5V6H1.5Z" fill="#888" stroke="#111"/><path d="M0 6.5H6" stroke="#111" stroke-width="1.4"/><path d="M3 7V9" stroke="#333"/><path d="M14.2 1.2L19.3 6.3M19.3 1.2L14.2 6.3" stroke="#222" stroke-width="1.3"/></svg>
<div class="t" style="left:1052.8px;top:109.20px;font-size:10.3px;">Current Project:</div>
<div class="a" style="left:1128px;top:105px;width:150px;height:19px;background:#ececec;border:1px solid #cdcdd2"></div>
<div class="t" style="left:1132px;top:109.20px;font-size:10.3px;">WebApp.src</div>
<svg style="left:1267px;top:113px" width="8.0" height="5.0" viewBox="0 0 8 5"><path d="M0.5 0.5L4 4L7.5 0.5" stroke="#444" stroke-width="1.2" fill="none"/></svg>
<div class="a" style="left:1046px;top:128px;width:233px;height:185px;background:#fff;border:1px solid #a8a8b0"></div>
<div class="a" style="left:1264px;top:129px;width:14px;height:183px;background:#f0f0f0;"></div>
<div class="a" style="left:1265px;top:144px;width:12px;height:155px;background:#c8c8c8;"></div>
<svg style="left:1267px;top:134px" width="9.0" height="6.0" viewBox="0 0 9 6"><path d="M1 5L4.5 1.5L8 5" stroke="#444" stroke-width="1.3" fill="none"/></svg>
<svg style="left:1267px;top:301px" width="9.0" height="6.0" viewBox="0 0 9 6"><path d="M1 1L4.5 4.5L8 1" stroke="#444" stroke-width="1.3" fill="none"/></svg>
<div class="a" style="left:1069px;top:143px;width:1px;height:169px;background-image:linear-gradient(#808080 50%,transparent 50%);background-size:1px 2px"></div>
<div class="a" style="left:1081px;top:158px;width:1px;height:120px;background-image:linear-gradient(#808080 50%,transparent 50%);background-size:1px 2px"></div>
<div class="a" style="left:1081px;top:293px;width:1px;height:19px;background-image:linear-gradient(#808080 50%,transparent 50%);background-size:1px 2px"></div>
<div class="a" style="left:1103px;top:190px;width:80px;height:15px;background:#eeeeee;"></div>
<svg style="left:1053px;top:134px" width="9.0" height="9.0" viewBox="0 0 9 9"><rect x="0.5" y="0.5" width="8" height="8" fill="#f4f4f8" stroke="#a8b0bc"/><path d="M2 4.5H7" stroke="#3a5a9a"/></svg>
<svg style="left:1062px;top:130px" width="16.0" height="15.0" viewBox="0 0 16 15"><rect x="1.5" y="1.5" width="12" height="10.5" fill="#fff" stroke="#333"/><rect x="1.5" y="1.5" width="12" height="2.2" fill="#333"/><circle cx="5.5" cy="10.5" r="4" fill="#fff" stroke="#333"/><path d="M4 6.5V14.5M7 6.5V14.5M1.5 9H9.5M1.5 12H9.5" stroke="#333" stroke-width="1"/></svg>
<div class="t" style="left:1081px;top:130.90px;font-size:10.3px;">WebApp.src</div>
<svg style="left:1065px;top:149px" width="9.0" height="9.0" viewBox="0 0 9 9"><rect x="0.5" y="0.5" width="8" height="8" fill="#f4f4f8" stroke="#a8b0bc"/><path d="M2 4.5H7" stroke="#3a5a9a"/></svg>
<svg style="left:1074px;top:145px" width="16.0" height="15.0" viewBox="0 0 16 15"><rect x="1.5" y="1.5" width="12" height="10.5" fill="#fff" stroke="#333"/><rect x="1.5" y="1.5" width="12" height="2.2" fill="#333"/><circle cx="5.5" cy="10.5" r="4" fill="#fff" stroke="#333"/><path d="M4 6.5V14.5M7 6.5V14.5M1.5 9H9.5M1.5 12H9.5" stroke="#333" stroke-width="1"/></svg>
<div class="t" style="left:1093.7px;top:145.90px;font-size:10.3px;">Web Views (8)</div>
<div class="a" style="left:1082px;top:168px;width:7px;height:1px;background-image:linear-gradient(90deg,#808080 50%,transparent 50%);background-size:2px 1px"></div>
<svg style="left:1090px;top:162px" width="9.0" height="11.0" viewBox="0 0 9 11"><path d="M0.5 0.5H6L8.5 3V10.5H0.5Z" fill="#fff" stroke="#333"/><path d="M5.5 0.5V3.5H8.5" fill="#333" stroke="#333"/><path d="M2 4.5H7M2 6.5H7M2 8.5H7" stroke="#333"/></svg>
<div class="t" style="left:1106px;top:160.90px;font-size:10.3px;">Login.wo</div>
<div class="a" style="left:1082px;top:183px;width:7px;height:1px;background-image:linear-gradient(90deg,#808080 50%,transparent 50%);background-size:2px 1px"></div>
<svg style="left:1090px;top:177px" width="9.0" height="11.0" viewBox="0 0 9 11"><path d="M0.5 0.5H6L8.5 3V10.5H0.5Z" fill="#fff" stroke="#333"/><path d="M5.5 0.5V3.5H8.5" fill="#333" stroke="#333"/><path d="M2 4.5H7M2 6.5H7M2 8.5H7" stroke="#333"/></svg>
<div class="t" style="left:1106px;top:175.90px;font-size:10.3px;">OTPRegister.wo</div>
<div class="a" style="left:1082px;top:198px;width:7px;height:1px;background-image:linear-gradient(90deg,#808080 50%,transparent 50%);background-size:2px 1px"></div>
<svg style="left:1090px;top:192px" width="9.0" height="11.0" viewBox="0 0 9 11"><path d="M0.5 0.5H6L8.5 3V10.5H0.5Z" fill="#fff" stroke="#333"/><path d="M5.5 0.5V3.5H8.5" fill="#333" stroke="#333"/><path d="M2 4.5H7M2 6.5H7M2 8.5H7" stroke="#333"/></svg>
<div class="t" style="left:1106px;top:190.90px;font-size:10.3px;">SqueakSelect.wo</div>
<div class="a" style="left:1082px;top:213px;width:7px;height:1px;background-image:linear-gradient(90deg,#808080 50%,transparent 50%);background-size:2px 1px"></div>
<svg style="left:1090px;top:207px" width="9.0" height="11.0" viewBox="0 0 9 11"><path d="M0.5 0.5H6L8.5 3V10.5H0.5Z" fill="#fff" stroke="#333"/><path d="M5.5 0.5V3.5H8.5" fill="#333" stroke="#333"/><path d="M2 4.5H7M2 6.5H7M2 8.5H7" stroke="#333"/></svg>
<div class="t" style="left:1106px;top:205.90px;font-size:10.3px;">SqueakSelect_ESQL.wo</div>
<div class="a" style="left:1082px;top:228px;width:7px;height:1px;background-image:linear-gradient(90deg,#808080 50%,transparent 50%);background-size:2px 1px"></div>
<svg style="left:1090px;top:222px" width="9.0" height="11.0" viewBox="0 0 9 11"><path d="M0.5 0.5H6L8.5 3V10.5H0.5Z" fill="#fff" stroke="#333"/><path d="M5.5 0.5V3.5H8.5" fill="#333" stroke="#333"/><path d="M2 4.5H7M2 6.5H7M2 8.5H7" stroke="#333"/></svg>
<div class="t" style="left:1106px;top:220.90px;font-size:10.3px;">SqueakZoom.wo</div>
<div class="a" style="left:1082px;top:243px;width:7px;height:1px;background-image:linear-gradient(90deg,#808080 50%,transparent 50%);background-size:2px 1px"></div>
<svg style="left:1090px;top:237px" width="9.0" height="11.0" viewBox="0 0 9 11"><path d="M0.5 0.5H6L8.5 3V10.5H0.5Z" fill="#fff" stroke="#333"/><path d="M5.5 0.5V3.5H8.5" fill="#333" stroke="#333"/><path d="M2 4.5H7M2 6.5H7M2 8.5H7" stroke="#333"/></svg>
<div class="t" style="left:1106px;top:235.90px;font-size:10.3px;">U2FRegister.wo</div>
<div class="a" style="left:1082px;top:258px;width:7px;height:1px;background-image:linear-gradient(90deg,#808080 50%,transparent 50%);background-size:2px 1px"></div>
<svg style="left:1090px;top:252px" width="9.0" height="11.0" viewBox="0 0 9 11"><path d="M0.5 0.5H6L8.5 3V10.5H0.5Z" fill="#fff" stroke="#333"/><path d="M5.5 0.5V3.5H8.5" fill="#333" stroke="#333"/><path d="M2 4.5H7M2 6.5H7M2 8.5H7" stroke="#333"/></svg>
<div class="t" style="left:1106px;top:250.90px;font-size:10.3px;">UserChangePasscode.wo</div>
<div class="a" style="left:1082px;top:273px;width:7px;height:1px;background-image:linear-gradient(90deg,#808080 50%,transparent 50%);background-size:2px 1px"></div>
<svg style="left:1090px;top:267px" width="9.0" height="11.0" viewBox="0 0 9 11"><path d="M0.5 0.5H6L8.5 3V10.5H0.5Z" fill="#fff" stroke="#333"/><path d="M5.5 0.5V3.5H8.5" fill="#333" stroke="#333"/><path d="M2 4.5H7M2 6.5H7M2 8.5H7" stroke="#333"/></svg>
<div class="t" style="left:1106px;top:265.90px;font-size:10.3px;">UserSettings.wo</div>
<svg style="left:1065px;top:284px" width="9.0" height="9.0" viewBox="0 0 9 9"><rect x="0.5" y="0.5" width="8" height="8" fill="#f4f4f8" stroke="#a8b0bc"/><path d="M2 4.5H7" stroke="#3a5a9a"/></svg>
<svg style="left:1074px;top:280px" width="16.0" height="15.0" viewBox="0 0 16 15"><rect x="1.5" y="1.5" width="12" height="10.5" fill="#fff" stroke="#333"/><rect x="1.5" y="1.5" width="12" height="2.2" fill="#333"/><circle cx="5.5" cy="10.5" r="4" fill="#fff" stroke="#333"/><path d="M4 6.5V14.5M7 6.5V14.5M1.5 9H9.5M1.5 12H9.5" stroke="#333" stroke-width="1"/></svg>
<div class="t" style="left:1093.7px;top:280.90px;font-size:10.3px;">Web Browser Objects (2)</div>
<div class="a" style="left:1082px;top:303px;width:7px;height:1px;background-image:linear-gradient(90deg,#808080 50%,transparent 50%);background-size:2px 1px"></div>
<svg style="left:1090px;top:297px" width="9.0" height="11.0" viewBox="0 0 9 11"><path d="M0.5 0.5H6L8.5 3V10.5H0.5Z" fill="#fff" stroke="#333"/><path d="M5.5 0.5V3.5H8.5" fill="#333" stroke="#333"/><path d="M2 4.5H7M2 6.5H7M2 8.5H7" stroke="#333"/></svg>
<div class="t" style="left:1106px;top:295.90px;font-size:10.3px;">SessionManager.wo</div>
<div class="a" style="left:1046px;top:316px;width:234px;height:17px;background:#c6d2de;border:1px solid #b4b8c2;border-bottom:none"></div>
<div class="t" style="left:1049px;top:319.40px;font-size:10.3px;color:#111">Properties</div>
<svg style="left:1255.5px;top:320px" width="24" height="10"><path d="M1.5 0.5H4.5V6H1.5Z" fill="#888" stroke="#111"/><path d="M0 6.5H6" stroke="#111" stroke-width="1.4"/><path d="M3 7V9" stroke="#333"/><path d="M14.2 1.2L19.3 6.3M19.3 1.2L14.2 6.3" stroke="#222" stroke-width="1.3"/></svg>
<div class="t" style="left:1055px;top:343.20px;font-size:10.3px;letter-spacing:-0.45px">Class:</div>
<div class="a" style="left:1083px;top:339.5px;width:190px;height:19px;background:#ececec;border:1px solid #d4d4d8"></div>
<div class="t" style="left:1085.6px;top:343.20px;font-size:10.3px;">cSecurity</div>
<div class="t" style="left:1052px;top:370.10px;font-size:10.3px;letter-spacing:-0.4px">Super:</div>
<div class="a" style="left:1083px;top:366px;width:190px;height:19.5px;background:#ececec;border:1px solid #d4d4d8"></div>
<div class="t" style="left:1085.6px;top:370.10px;font-size:10.3px;">cSecurityObject</div>
<div class="a" style="left:1047px;top:392.5px;width:55px;height:20px;background:#fcfcfc;border:1px solid #e8e8ec;border-bottom:none"></div>
<div class="t" style="left:1053px;top:395.20px;font-size:10.3px;">Properties</div>
<div class="a" style="left:1103px;top:394px;width:37px;height:18px;background:#eeeef2;border:1px solid #d8d8dc;border-bottom:none"></div>
<div class="t" style="left:1107px;top:397.00px;font-size:10.3px;">Events</div>
<div class="a" style="left:1047px;top:412px;width:229px;height:21px;background:#f0f0f2;"></div>
<div class="a" style="left:1049px;top:413px;width:19px;height:18px;background:#c8e0f8;border:1px solid #90c0ec"></div>
<svg style="left:1052px;top:415px" width="13.0" height="13.0" viewBox="0 0 13 13"><rect x="0.5" y="0.5" width="5" height="5" fill="#fff" stroke="#555"/><rect x="2" y="2" width="2" height="2" fill="#333"/><rect x="0.5" y="7.5" width="5" height="5" fill="#fff" stroke="#555"/><rect x="2" y="9" width="2" height="2" fill="#333"/><path d="M7 3H12M7 10H12M8 5H12M8 12H12" stroke="#888" stroke-dasharray="1 1"/></svg>
<svg style="left:1072px;top:414px" width="12.0" height="14.0" viewBox="0 0 12 14"><text x="0" y="6.5" font-size="7" font-family="Liberation Sans" fill="#333">A</text><text x="0" y="13.5" font-size="7" font-family="Liberation Sans" fill="#333">Z</text><path d="M8.5 1V12M6.5 10L8.5 13L10.5 10" stroke="#1e3a9a" stroke-width="1.3" fill="none"/></svg>
<div class="a" style="left:1049px;top:433px;width:227px;height:235px;background:#fff;border:1px solid #8c98b0;border-bottom:none"></div>
<div class="a" style="left:1050px;top:434px;width:225px;height:15.5px;background:#ebebf0;"></div>
<div class="a" style="left:1050px;top:449.5px;width:11px;height:32px;background:#ebebf0;"></div>
<div class="a" style="left:1050px;top:481px;width:225px;height:16px;background:#ebebf0;"></div>
<div class="a" style="left:1050px;top:497px;width:11px;height:16px;background:#ebebf0;"></div>
<div class="a" style="left:1061px;top:465px;width:214px;height:1px;background:#ebebf0;"></div>
<div class="a" style="left:1061px;top:481px;width:214px;height:1px;background:#ebebf0;"></div>
<div class="a" style="left:1061px;top:497px;width:214px;height:1px;background:#ebebf0;"></div>
<div class="a" style="left:1061px;top:513px;width:214px;height:1px;background:#ebebf0;"></div>
<div class="a" style="left:1163px;top:449.5px;width:1px;height:64px;background:#ebebf0;"></div>
<svg style="left:1054px;top:439px" width="6.0" height="6.0" viewBox="0 0 6 6"><path d="M5 0V5H0Z" fill="#222"/></svg>
<div class="t" style="left:1064px;top:435.60px;font-size:10.3px;font-weight:bold">Behavior</div>
<div class="t" style="left:1064px;top:451.80px;font-size:10.3px;">Delegation_Mode</div>
<div class="t" style="left:1166.3px;top:451.80px;font-size:10.3px;">No_Delegation</div>
<div class="t" style="left:1064px;top:467.70px;font-size:10.3px;">peNeighborhood</div>
<div class="t" style="left:1166.3px;top:467.70px;font-size:10.3px;">nhPrivate</div>
<svg style="left:1054px;top:487px" width="6.0" height="6.0" viewBox="0 0 6 6"><path d="M5 0V5H0Z" fill="#222"/></svg>
<div class="t" style="left:1064px;top:483.70px;font-size:10.3px;font-weight:bold">Security</div>
<div class="t" style="left:1064px;top:498.60px;font-size:10.3px;">pbFallbackToPlaintext</div>
<div class="t" style="left:1166.3px;top:498.60px;font-size:10.3px;">False</div>
<div class="a" style="left:0px;top:668px;width:1280px;height:19px;background:#007acc;"></div>
<div class="t" style="left:3px;top:672.30px;font-size:10.3px;color:#fff;letter-spacing:-0.14px">C:\Projects\SecurityMatters\Lib\DFSecurity\AppSrc\cSecurity.pkg</div>
<div class="t" style="left:961px;top:671.90px;font-size:10.3px;color:#fff">Ln 278</div>
<div class="t" style="left:999px;top:671.90px;font-size:10.3px;color:#fff">Col 32</div>
<svg style="left:1145px;top:670px" width="14.0" height="14.0" viewBox="0 0 14 14"><circle cx="7" cy="7" r="6.3" fill="#fff" stroke="#999" stroke-width="0.8"/><circle cx="7" cy="7" r="4.3" fill="none" stroke="#555" stroke-width="1.5"/><path d="M4 4L10 10" stroke="#555" stroke-width="1.5"/></svg>
<div class="t" style="left:1174px;top:671.90px;font-size:10.3px;color:#fff">INS</div>
<div class="t" style="left:1211px;top:671.90px;font-size:10.3px;color:#5cb0f0">CAPS</div>
<div class="t" style="left:1248px;top:671.90px;font-size:10.3px;color:#fff">NUM</div>
<div class="a" style="left:0px;top:687px;width:1280px;height:33px;background:#000;"></div>
<svg style="left:13px;top:696px" width="14.0" height="15.0" viewBox="0 0 14 15"><path d="M0 2L6.5 1.1V7.5H0Z M7.5 1L14 0V7.5H7.5Z M0 8.5H6.5V14.9L0 14Z M7.5 8.5H14V15L7.5 14Z" fill="#fff"/></svg>
<svg style="left:53px;top:693px" width="20.0" height="20.0" viewBox="0 0 20 20"><circle cx="10" cy="10" r="9.3" fill="#1a78e0"/><circle cx="10" cy="11" r="5" fill="#0b3c8c"/><path d="M3 5Q8 0 14 3Q9 3 8 6Q6 8 9 10Q6 12 4 9Z" fill="#70c0ff"/><path d="M14 1L17 4L14 5Z" fill="#5ad0ff"/></svg>
<svg style="left:94px;top:693px" width="20.0" height="20.0" viewBox="0 0 20 20"><circle cx="10" cy="10" r="9.3" fill="#ffbb22"/><circle cx="10.5" cy="10.5" r="5.5" fill="#3a40c8"/><path d="M2 8Q3 1 10 1Q17 1 19 7Q15 3 11 5Q6 4 5 9Q7 15 13 15Q17 14 19 11Q17 19 9 19Q1 17 2 8Z" fill="#f0501a"/></svg>
<div class="a" style="left:87px;top:718px;width:34px;height:2px;background:#76b9ed;"></div>
<svg style="left:136px;top:694px" width="18.0" height="18.0" viewBox="0 0 18 18"><circle cx="9" cy="9" r="9" fill="#db4437"/><path d="M9 9L1.2 4.5A9 9 0 0 0 9 18Z" fill="#0f9d58"/><path d="M9 9L16.8 4.5A9 9 0 0 1 9 18Z" fill="#ffcd40"/><circle cx="9" cy="9" r="4.2" fill="#fff"/><circle cx="9" cy="9" r="3.2" fill="#4285f4"/></svg>
<svg style="left:177px;top:695px" width="18.0" height="16.0" viewBox="0 0 18 16"><path d="M0 2H7L9 4H18V16H0Z" fill="#e8c060"/><path d="M0 6H18V16H0Z" fill="#ffe08a"/><path d="M5 16V10H13V16H11V12H7V16Z" fill="#3a9ae0"/></svg>
<div class="a" style="left:170px;top:718px;width:35px;height:2px;background:#76b9ed;"></div>
<div class="a" style="left:208px;top:687px;width:40px;height:33px;background:#333;"></div>
<svg style="left:218px;top:693px" width="20.0" height="20.0" viewBox="0 0 20 20"><path d="M0 1Q0 0 1 0H20V13Q20 20 13 20H0Z" fill="#f05a1e"/><text x="2.3" y="14.5" font-size="11.5" font-family="Liberation Sans" font-weight="bold" fill="#fff" letter-spacing="-1.2">DF</text></svg>
<div class="a" style="left:208px;top:718px;width:40px;height:2px;background:#76b9ed;"></div>
<svg style="left:259px;top:693px" width="20.0" height="20.0" viewBox="0 0 20 20"><circle cx="13" cy="8" r="7" fill="#111" stroke="#eee" stroke-width="1.2"/><path d="M6 8H20M13 1V15M8 4H18M8 12H18" stroke="#eee" stroke-width="0.9"/><rect x="1" y="12" width="9" height="8" fill="#222" stroke="#eee"/><circle cx="5" cy="9" r="2.5" fill="#aaa"/></svg>
<svg style="left:300px;top:693px" width="20.0" height="20.0" viewBox="0 0 20 20"><ellipse cx="7" cy="3.5" rx="6" ry="2.8" fill="#ffe080"/><rect x="1" y="3.5" width="12" height="10" fill="#f0c040"/><ellipse cx="7" cy="13.5" rx="6" ry="2.8" fill="#e0a020"/><path d="M11 11L19 19M19 11L11 19" stroke="#ccc" stroke-width="2"/><path d="M15 2H19V6M1 16V20H5" stroke="#3a9a4a" stroke-width="1.5" fill="none"/></svg>
<svg style="left:342px;top:693px" width="20.0" height="20.0" viewBox="0 0 20 20"><path d="M1 1H13L17 5V20H1Z" fill="#f4f4f4"/><path d="M1 11H17V20H1Z" fill="#6ac04a"/><path d="M4 14V5M6 13V7M8 14L9 10L11 13" stroke="#222" stroke-width="1" fill="none"/><path d="M12 13L19 2" stroke="#e0a020" stroke-width="2"/></svg>
<div class="a" style="left:335px;top:718px;width:34px;height:2px;background:#76b9ed;"></div>
<div class="a" style="left:396px;top:-1px;width:313px;height:407px;background:#e6e7ec;border:1px solid #cfd0d8;box-shadow:1px 1px 1px rgba(0,0,0,0.10)"></div>
<div class="a" style="left:397px;top:1.25px;width:311px;height:19px;background:#fff;"></div>
<svg style="left:400.5px;top:3px" width="14.0" height="14.0" viewBox="0 0 16 16"><path d="M1 2.5H6M4 0.5L6.3 2.5L4 4.5" stroke="#1e64b4" stroke-width="1.6" fill="none"/><path d="M7 5H14.5V15.5H6V14.5H13.5V6H7Z" fill="#c8b090"/><rect x="5" y="7.5" width="7" height="6.5" fill="#3c3c3c"/></svg>
<div class="t" style="left:425.8px;top:4.00px;font-size:10.3px;color:#1e1e1e">Go To Definition   &lt;cSecurityObject&gt;</div>
<svg style="left:400.5px;top:21.5px" width="14.0" height="14.0" viewBox="0 0 16 16"><path d="M3.5 3.5V1.5H10L12.5 4V6M1.5 4.5V13.5H6" stroke="#424242" fill="none" stroke-width="1.1"/><circle cx="8" cy="9" r="3.6" fill="#f0f0f0" stroke="#424242" stroke-width="1.3"/><path d="M10.5 11.5L14 15" stroke="#424242" stroke-width="1.6"/></svg>
<div class="t" style="left:425.8px;top:22.50px;font-size:10.3px;color:#1e1e1e">Find All Occurrences   &lt;cSecurityObject&gt;</div>
<svg style="left:400.5px;top:40px" width="14.0" height="14.0" viewBox="0 0 16 16"><path d="M6 3H15L10 11Z" fill="#c03818"/><path d="M4.5 4V11M2 8.5L4.5 11.5L7 8.5" stroke="#1e64b4" stroke-width="1.8" fill="none"/></svg>
<div class="t" style="left:425.8px;top:41.00px;font-size:10.3px;color:#1e1e1e">Push Quick Mark</div>
<div class="t" style="left:560px;width:131px;top:40.83px;text-align:right;letter-spacing:0px;color:#1e1e1e">Ctrl+Q</div>
<svg style="left:400.5px;top:58.5px" width="14.0" height="14.0" viewBox="0 0 16 16"><path d="M6 3H15L10 11Z" fill="#c03818"/><path d="M4.5 14V7M2 9.5L4.5 6.5L7 9.5" stroke="#1e64b4" stroke-width="1.8" fill="none"/></svg>
<div class="t" style="left:425.8px;top:59.50px;font-size:10.3px;color:#1e1e1e">Pop Quick Mark  &lt;DFSecurity.pkg - Line: 12&gt;</div>
<div class="t" style="left:560px;width:131px;top:59.33px;text-align:right;letter-spacing:0px;color:#1e1e1e">Ctrl+Shift+Q</div>
<svg style="left:400.5px;top:79px" width="14.0" height="14.0" viewBox="0 0 16 16"><path d="M1 5H6L7 6.5H14V14.5H1Z" fill="#f0d8a8" stroke="#e0b878" stroke-width="0.8"/><path d="M1 9H15L14 14.5H1Z" fill="#e8b870"/><path d="M2 6Q2 2 6 2" stroke="#1e64b4" stroke-width="1.8" fill="none"/><path d="M5 0L8 2L5 4Z" fill="#1e64b4"/></svg>
<div class="t" style="left:425.8px;top:80.00px;font-size:10.3px;color:#1e1e1e">Open File Under Cursor</div>
<svg style="left:400.5px;top:97.5px" width="14.0" height="14.0" viewBox="0 0 16 16"><path d="M3.5 12V1.5L11 9" stroke="#424242" stroke-width="1.2" fill="none"/><rect x="1" y="10" width="13" height="5" fill="#424242"/><path d="M4 11V13M7 11V13M10 11V13" stroke="#eee" stroke-width="1"/></svg>
<div class="t" style="left:425.8px;top:98.50px;font-size:10.3px;color:#1e1e1e">Switch to Designer</div>
<div class="t" style="left:560px;width:131px;top:98.33px;text-align:right;letter-spacing:0px;color:#1e1e1e">F7</div>
<svg style="left:400.5px;top:116px" width="14.0" height="14.0" viewBox="0 0 16 16"><rect x="1.5" y="1.5" width="13" height="12" fill="#fff8ec" stroke="#424242" stroke-width="1.1"/><rect x="1.5" y="1.5" width="13" height="2.2" fill="#424242"/><path d="M3.5 7L6 5.5L8.5 7V9L6 10.5L3.5 9Z" fill="#e89020"/><path d="M8 10L10.5 8.5L13 10V12L10.5 13.5L8 12Z" fill="#e89020"/></svg>
<div class="t" style="left:425.8px;top:117.00px;font-size:10.3px;color:#1e1e1e">Locate in Code Explorer</div>
<div class="t" style="left:560px;width:131px;top:116.83px;text-align:right;letter-spacing:0px;color:#1e1e1e">Ctrl+F7</div>
<svg style="left:400.5px;top:134.5px" width="14.0" height="14.0" viewBox="0 0 16 16"><rect x="5.5" y="1.5" width="9" height="13" fill="#fff" stroke="#424242" stroke-width="1.1"/><path d="M6 5H14M6 8H14M6 11H14M10 2V14" stroke="#424242" stroke-width="0.9"/><path d="M2 7V12M4 7V12M1 11.5H5V15H1Z" fill="#424242" stroke="#424242"/></svg>
<div class="t" style="left:425.8px;top:135.50px;font-size:10.3px;color:#1e1e1e">Object Properties</div>
<div class="t" style="left:560px;width:131px;top:135.33px;text-align:right;letter-spacing:0px;color:#1e1e1e">Ctrl+2</div>
<svg style="left:400.5px;top:155px" width="14.0" height="14.0" viewBox="0 0 16 16"><path d="M3 1V6M0.5 3.5H5.5" stroke="#9a9a9a" stroke-width="1.1"/><path d="M6 5L10 7L13 10" stroke="#9a9a9a" stroke-width="1.1" fill="none"/><circle cx="4" cy="12" r="2.5" fill="none" stroke="#9a9a9a" stroke-width="1.2"/><circle cx="12" cy="12" r="2.5" fill="none" stroke="#9a9a9a" stroke-width="1.2"/><path d="M6.5 12H9.5" stroke="#9a9a9a"/></svg>
<div class="t" style="left:425.8px;top:156.00px;font-size:10.3px;color:#a4a4a8">Add to Watch</div>
<svg style="left:400.5px;top:175.5px" width="14.0" height="14.0" viewBox="0 0 16 16"><path d="M1 3L9 8L1 13Z" fill="#a0a0a0"/><path d="M11 2.5H15M13 2.5V13.5M11 13.5H15" stroke="#a0a0a0" stroke-width="1.1"/></svg>
<div class="t" style="left:425.8px;top:176.50px;font-size:10.3px;color:#a4a4a8">Run to Cursor</div>
<div class="t" style="left:560px;width:131px;top:176.33px;text-align:right;letter-spacing:0px;color:#a4a4a8">Shift+F10</div>
<svg style="left:400.5px;top:194px" width="14.0" height="14.0" viewBox="0 0 16 16"><path d="M1 10H7M4.5 7.5L7 10L4.5 12.5" stroke="#9a9a9a" stroke-width="1.5" fill="none"/><rect x="10" y="1" width="2" height="2" fill="#9a9a9a"/><rect x="10" y="4" width="2" height="9" fill="#9a9a9a"/></svg>
<div class="t" style="left:425.8px;top:195.00px;font-size:10.3px;color:#a4a4a8">Set Next Instruction</div>
<svg style="left:400.5px;top:215px" width="14.0" height="14.0" viewBox="0 0 16 16"><circle cx="8" cy="8" r="6.5" fill="#e82000"/></svg>
<div class="t" style="left:425.8px;top:216.00px;font-size:10.3px;color:#1e1e1e">Breakpoint Set/Remove</div>
<div class="t" style="left:560px;width:131px;top:215.83px;text-align:right;letter-spacing:0px;color:#1e1e1e">F9</div>
<svg style="left:400.5px;top:233.5px" width="14.0" height="14.0" viewBox="0 0 16 16"><circle cx="10.5" cy="5.5" r="4.8" fill="#fff" stroke="#e82000" stroke-width="1.1"/><circle cx="6" cy="10" r="5" fill="#e82000"/></svg>
<div class="t" style="left:425.8px;top:234.50px;font-size:10.3px;color:#1e1e1e">Breakpoint Enable/Disable</div>
<div class="t" style="left:560px;width:131px;top:234.33px;text-align:right;letter-spacing:0px;color:#1e1e1e">Crtl+F9</div>
<svg style="left:400.5px;top:252px" width="14.0" height="14.0" viewBox="0 0 16 16"><circle cx="8" cy="8" r="6.5" fill="#9a9a9a"/><circle cx="8" cy="8" r="4" fill="#eee"/><path d="M10 6.3A2.4 2.4 0 1 0 10 9.7" stroke="#9a9a9a" stroke-width="1.4" fill="none"/></svg>
<div class="t" style="left:425.8px;top:253.00px;font-size:10.3px;color:#a4a4a8">Breakpoint Condition...</div>
<svg style="left:400.5px;top:273px" width="14.0" height="14.0" viewBox="0 0 16 16"><path d="M4 1L10 11M12 1L6 11" stroke="#a0a0a0" stroke-width="1.2" fill="none"/><circle cx="4.5" cy="12.5" r="2.3" stroke="#a0a0a0" stroke-width="1.2" fill="none"/><circle cx="11.5" cy="12.5" r="2.3" stroke="#a0a0a0" stroke-width="1.2" fill="none"/></svg>
<div class="t" style="left:425.8px;top:274.00px;font-size:10.3px;color:#a4a4a8">Cut</div>
<div class="t" style="left:560px;width:131px;top:273.83px;text-align:right;letter-spacing:0px;color:#a4a4a8">Ctrl+X</div>
<svg style="left:400.5px;top:291px" width="14.0" height="14.0" viewBox="0 0 16 16"><path d="M6.5 1.5H12L14.5 4V11.5H6.5Z" fill="none" stroke="#a0a0a0" stroke-width="1.2"/><path d="M1.5 5.5H7L9.5 8V14.5H1.5Z" fill="#eeeef2" stroke="#a0a0a0" stroke-width="1.2"/></svg>
<div class="t" style="left:425.8px;top:292.00px;font-size:10.3px;color:#a4a4a8">Copy</div>
<div class="t" style="left:560px;width:131px;top:291.83px;text-align:right;letter-spacing:0px;color:#a4a4a8">Ctrl+C</div>
<svg style="left:400.5px;top:309.5px" width="14.0" height="14.0" viewBox="0 0 16 16"><path d="M6.5 4.5V1.5H10.5V4.5M4.5 4.5H12.5V14.5H9" fill="none" stroke="#6d6d6d" stroke-width="1.2"/><rect x="1.5" y="8.5" width="7" height="6" fill="#eeeef2" stroke="#6d6d6d" stroke-width="1.2"/></svg>
<div class="t" style="left:425.8px;top:310.50px;font-size:10.3px;color:#1e1e1e">Paste</div>
<div class="t" style="left:560px;width:131px;top:310.33px;text-align:right;letter-spacing:0px;color:#1e1e1e">Ctrl+V</div>
<svg style="left:400.5px;top:330px" width="14.0" height="14.0" viewBox="0 0 16 16"><path d="M3 0.5V6.5M0 3.5H6" stroke="#6d6d6d" stroke-width="1.2"/><path d="M4.5 5.5H11L14.5 9V15.5H4.5Z" fill="#f4f4f4" stroke="#6d6d6d" stroke-width="1.2"/></svg>
<div class="t" style="left:425.8px;top:331.00px;font-size:10.3px;color:#a4a4a8">Add Component to Project &lt;WebApp.src&gt;</div>
<svg style="left:400.5px;top:348.5px" width="14.0" height="14.0" viewBox="0 0 16 16"><circle cx="8" cy="8" r="7" fill="#a8a8a8"/><path d="M6 4.5L11.5 8L6 11.5Z" fill="#eee"/></svg>
<div class="t" style="left:425.8px;top:349.50px;font-size:10.3px;color:#a4a4a8">Test View/Report</div>
<svg style="left:400.5px;top:369px" width="14.0" height="14.0" viewBox="0 0 16 16"><circle cx="8" cy="8" r="7.8" fill="#3a78c8"/><text x="8" y="12.6" text-anchor="middle" font-size="12" font-weight="bold" font-family="Liberation Sans" fill="#fff">?</text></svg>
<div class="t" style="left:425.8px;top:370.00px;font-size:10.3px;color:#1e1e1e">Editor Help</div>
<svg style="left:400.5px;top:387.5px" width="14.0" height="14.0" viewBox="0 0 16 16"><rect x="5.5" y="1.5" width="9" height="12" fill="#fff" stroke="#424242" stroke-width="1.1"/><path d="M7.5 4.5H12.5M7.5 7.5H12.5M7.5 10.5H12.5" stroke="#424242"/><path d="M0.5 10L2.5 14L6 5" stroke="#424242" stroke-width="1.2" fill="none"/></svg>
<div class="t" style="left:425.8px;top:388.50px;font-size:10.3px;color:#1e1e1e">Editor Properties...</div>
<div class="a" style="left:425px;top:75.5px;width:283px;height:1px;background:#d4d5dc;"></div>
<div class="a" style="left:425px;top:151.5px;width:283px;height:1px;background:#d4d5dc;"></div>
<div class="a" style="left:425px;top:172px;width:283px;height:1px;background:#d4d5dc;"></div>
<div class="a" style="left:425px;top:211.5px;width:283px;height:1px;background:#d4d5dc;"></div>
<div class="a" style="left:425px;top:269.5px;width:283px;height:1px;background:#d4d5dc;"></div>
<div class="a" style="left:425px;top:326.5px;width:283px;height:1px;background:#d4d5dc;"></div>
<div class="a" style="left:425px;top:365.5px;width:283px;height:1px;background:#d4d5dc;"></div>
<svg style="left:469px;top:7px" width="10.0" height="16.0" viewBox="0 0 10 16"><path d="M0.5 0.5V13L3.5 10L6 15L8 14L5.5 9H9.5Z" fill="#fff" stroke="#000" stroke-width="1"/></svg></body></html>
